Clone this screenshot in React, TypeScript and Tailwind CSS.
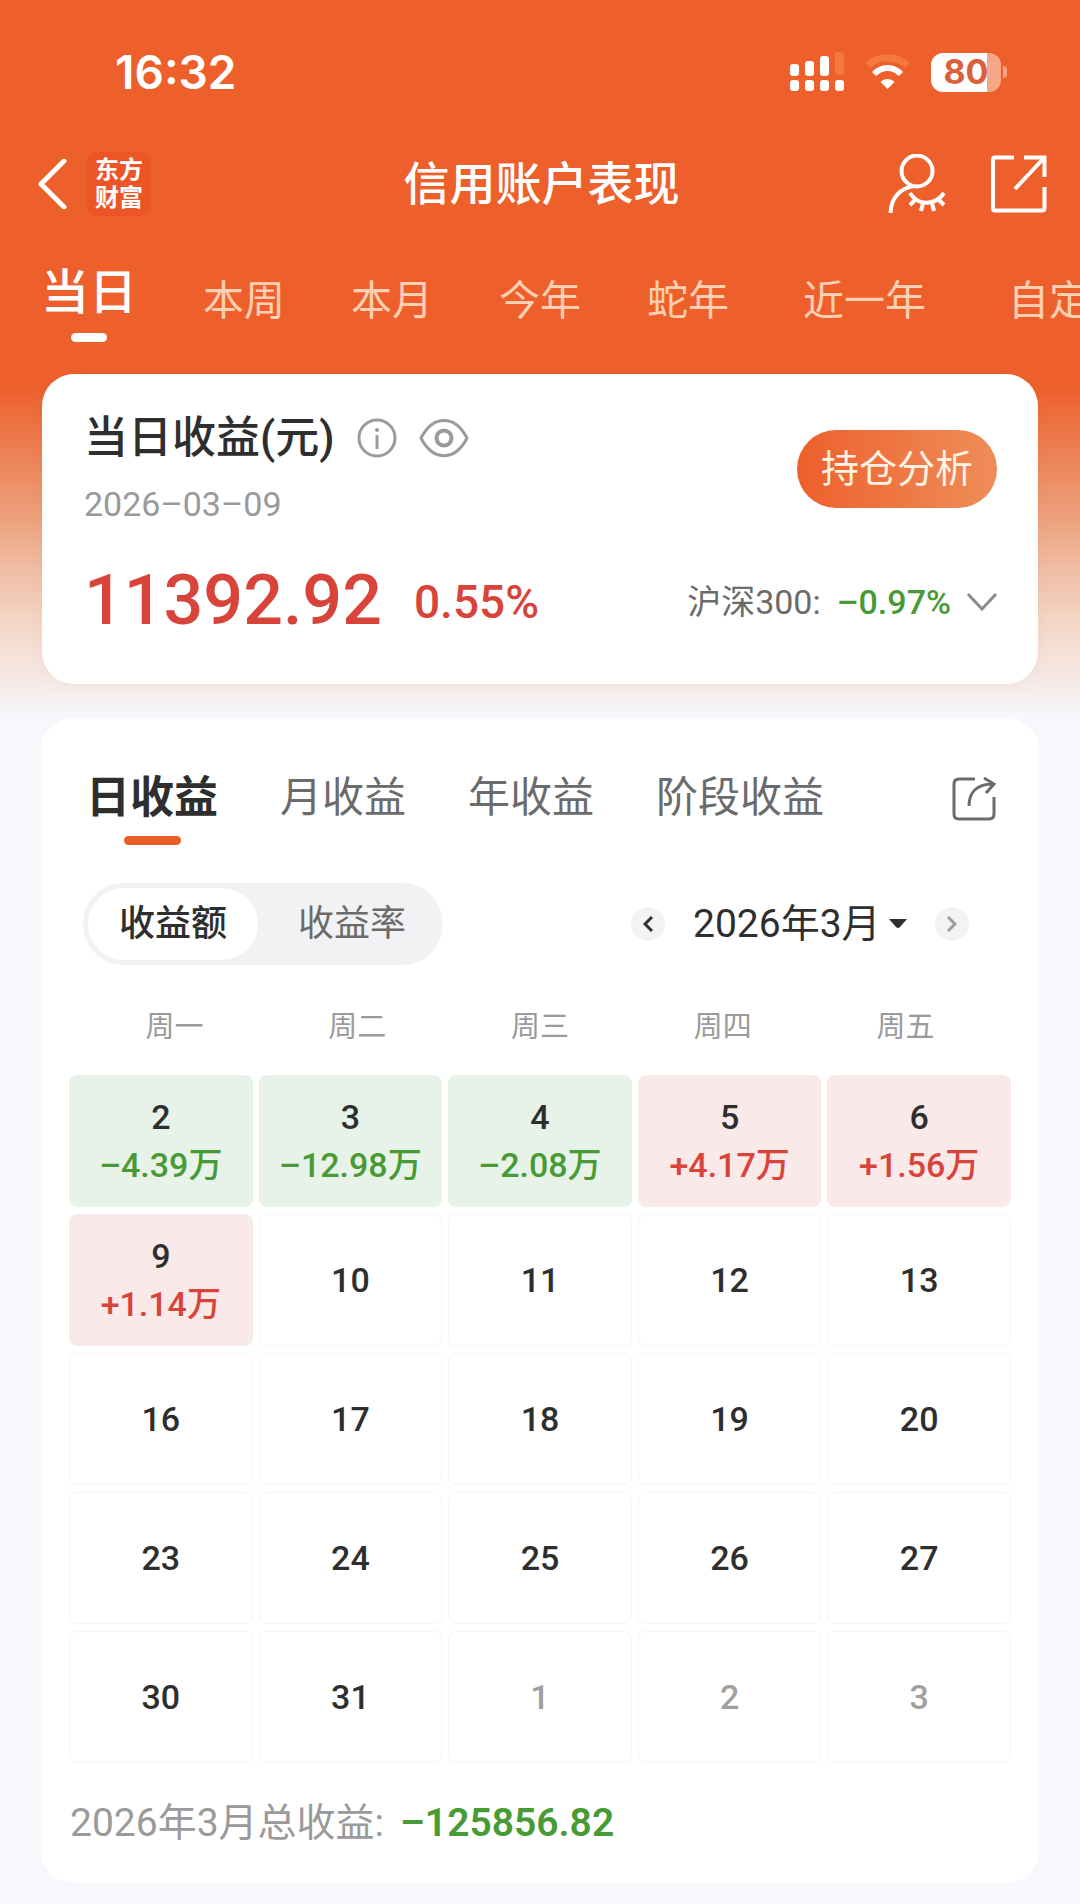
import { useState } from 'react';
import clsx from 'clsx';

const periods = ['当日', '本周', '本月', '今年', '蛇年', '近一年', '自定义'];
const profitTabs = ['日收益', '月收益', '年收益', '阶段收益'];
const weekdays = ['周一', '周二', '周三', '周四', '周五'];

type Day = { day: number; amount?: string; outside?: boolean };

const days: Day[] = [
    { day: 2, amount: '–4.39万' },
    { day: 3, amount: '–12.98万' },
    { day: 4, amount: '–2.08万' },
    { day: 5, amount: '+4.17万' },
    { day: 6, amount: '+1.56万' },
    { day: 9, amount: '+1.14万' },
    ...[10, 11, 12, 13, 16, 17, 18, 19, 20, 23, 24, 25, 26, 27, 30, 31].map(day => ({ day })),
    ...[1, 2, 3].map(day => ({ day, outside: true })),
];

function StatusBar() {
    return (
        <div className="flex h-[144px] items-center justify-between pl-[115px] pr-[73px]">
            <span className="font-['Inter',sans-serif] text-[46px] font-semibold leading-none">16:32</span>
            <div className="flex items-center gap-[21px]">
                <svg width="54" height="40" viewBox="0 0 54 40" fill="currentColor" aria-hidden="true">
                    <rect x="0" y="12" width="9" height="12" rx="3" />
                    <rect x="15" y="9" width="9" height="15" rx="3" />
                    <rect x="30" y="4" width="9" height="20" rx="3" />
                    <rect x="45" y="0" width="9" height="23" rx="3" fill="#f3793f" />
                    <rect x="0" y="28" width="9" height="11" rx="3" />
                    <rect x="15" y="28" width="9" height="11" rx="3" />
                    <rect x="30" y="28" width="9" height="11" rx="3" />
                    <rect x="45" y="28" width="9" height="11" rx="3" />
                </svg>
                <svg width="45" height="36" viewBox="0 0 45 36" fill="none" aria-hidden="true">
                    <path d="M2.500 11.500C14 1 31 1 42.500 11.500" stroke="#f3793f" strokeWidth="7" />
                    <path d="M9 20C17 12 28 12 36 20" stroke="currentColor" strokeWidth="6" />
                    <path d="M22.500 35L15.500 28C19 24 26 24 29.500 28Z" fill="currentColor" />
                </svg>
                <div className="flex items-center gap-[2px]">
                    <div className="flex h-[39px] w-[70px] items-center justify-center rounded-[12px] bg-[linear-gradient(to_right,#fff_80%,#f6a787_80%)] font-['Inter',sans-serif] text-[34px] font-bold leading-none text-[#d9603a]">
                        80
                    </div>
                    <div className="h-[12px] w-[4px] rounded-r-full bg-[#f6a787]" />
                </div>
            </div>
        </div>
    );
}

function NavBar() {
    return (
        <div className="grid h-[80px] grid-cols-[1fr_auto_1fr] items-center pl-[36px] pr-[33px]">
            <div className="flex items-center gap-[19px]">
                <button aria-label="返回">
                    <svg width="32" height="50" viewBox="0 0 32 50" fill="none" stroke="currentColor" strokeWidth="5" aria-hidden="true">
                        <path d="M28 2L5 25L28 48" strokeLinecap="round" strokeLinejoin="round" />
                    </svg>
                </button>
                <div className="rounded-[10px] bg-[#ec5627] px-[8px] py-[4px] text-[24px] font-bold leading-[28px]">
                    东方
                    <br />
                    财富
                </div>
            </div>
            <h1 className="text-[46px] font-medium leading-none">信用账户表现</h1>
            <div className="flex items-center justify-end gap-[44px]">
                <button aria-label="隐藏账户">
                    <svg width="58" height="60" viewBox="0 0 58 60" fill="none" stroke="currentColor" strokeWidth="4" aria-hidden="true">
                        <circle cx="29" cy="17" r="15.500" />
                        <path d="M26 32C12 34 3 44 2.500 59" />
                        <path d="M22 39C30 52 47 52 56 39" />
                        <path d="M28 45L22 51M35 49L33 57M44 49L46 57M50 45L56 51" />
                    </svg>
                </button>
                <button aria-label="分享">
                    <svg width="57" height="60" viewBox="0 0 57 60" fill="none" stroke="currentColor" strokeWidth="4" aria-hidden="true">
                        <path d="M24 3.500H5Q3 3.500 3 5.500V54Q3 56.500 5 56.500H52Q54.500 56.500 54.500 54V33" strokeLinejoin="round" />
                        <path d="M34 3.500H54.500V23M54 4L25 35" />
                    </svg>
                </button>
            </div>
        </div>
    );
}

function SummaryCard() {
    return (
        <section className="mx-[42px] rounded-[32px] bg-white pb-[44px] pl-[42px] pr-[41px] pt-[40px] shadow-[0_4px_16px_rgba(0,0,0,0.03)]">
            <div className="flex items-center justify-between">
                <div>
                    <div className="flex items-center gap-[22px] text-[#9a9a9a]">
                        <h2 className="text-[44px] font-medium leading-[48px] text-[#2e2e2e]">当日收益(元)</h2>
                        <button aria-label="说明">
                            <svg width="40" height="40" viewBox="0 0 40 40" fill="none" stroke="currentColor" strokeWidth="3" aria-hidden="true">
                                <circle cx="20" cy="20" r="18" />
                                <path d="M20 17V31" />
                                <circle cx="20" cy="12" r="2" fill="currentColor" stroke="none" />
                            </svg>
                        </button>
                        <button aria-label="隐藏金额">
                            <svg width="50" height="40" viewBox="0 0 50 40" fill="none" stroke="currentColor" strokeWidth="3" aria-hidden="true">
                                <path d="M2 20C14 -3.500 36 -3.500 48 20C36 43.500 14 43.500 2 20Z" strokeLinejoin="round" />
                                <circle cx="25" cy="20" r="7.500" strokeWidth="4" />
                            </svg>
                        </button>
                    </div>
                    <p className="mt-[22px] text-[34px] leading-[40px] text-[#9a9a9a]">2026–03–09</p>
                </div>
                <button className="h-[78px] w-[200px] rounded-full bg-gradient-to-r from-[#ed5f2b] to-[#ee8d58] text-[38px] leading-none text-[#fff3e6]">
                    持仓分析
                </button>
            </div>
            <div className="mt-[36px] flex items-center justify-between">
                <div className="flex items-center gap-[32px] text-[#d8433a]">
                    <strong className="text-[70px] font-medium leading-[80px]">11392.92</strong>
                    <span className="pt-1 text-[46px] font-medium leading-none">0.55%</span>
                </div>
                <button className="flex items-center gap-[16px] pt-1 text-[34px] leading-none">
                    <span className="text-[#6b6b6b]">沪深300:</span>
                    <span className="font-medium text-[#489a35]">–0.97%</span>
                    <svg width="30" height="18" viewBox="0 0 30 18" fill="none" stroke="#8c8c8c" strokeWidth="3" aria-hidden="true">
                        <path d="M1 1L15 16L29 1" />
                    </svg>
                </button>
            </div>
        </section>
    );
}

function DayCell({ day, amount, outside }: Day) {
    const loss = amount?.startsWith('–');
    return (
        <button
            className={clsx(
                'flex h-[132px] flex-col items-center justify-center rounded-[8px] border text-[34px] font-medium leading-[48px]',
                !amount && 'border-[#f5f5f5] bg-white',
                amount && (loss ? 'border-[#e7f3e8] bg-[#e7f3e8]' : 'border-[#f9e9e9] bg-[#f9e9e9]'),
                outside ? 'text-[#a0a0a0]' : 'text-[#2e2e2e]'
            )}
        >
            <span>{day}</span>
            {amount && <span className={loss ? 'text-[#489a35]' : 'text-[#d8433a]'}>{amount}</span>}
        </button>
    );
}

function ProfitCalendar() {
    const [tab, setTab] = useState('日收益');
    const [mode, setMode] = useState('收益额');

    return (
        <section className="mx-[41px] mt-[34px] rounded-[32px] bg-white px-[28px] pb-[34px] pt-[50px]">
            {/* Tabs */}
            <div className="flex items-start justify-between pl-[17px] pr-[14px]">
                <div className="flex gap-[62px]">
                    {profitTabs.map(t => (
                        <button
                            key={t}
                            onClick={() => setTab(t)}
                            className={clsx(
                                'flex flex-col items-center gap-[8px] whitespace-nowrap leading-[60px]',
                                t === tab ? 'text-[44px] font-bold text-[#2e2e2e]' : 'text-[42px] text-[#6b6b6b]'
                            )}
                        >
                            {t}
                            {t === tab && <span className="h-[9px] w-[57px] rounded-full bg-[#ea5d29]" />}
                        </button>
                    ))}
                </div>
                <button aria-label="分享收益" className="pt-2">
                    <svg width="46" height="46" viewBox="0 0 46 46" fill="none" stroke="#6b6b6b" strokeWidth="3" aria-hidden="true">
                        <path d="M24 3H8Q3 3 3 8V38Q3 43 8 43H38Q43 43 43 38V21" />
                        <path d="M18 30C18 16 26 8 42 8M33 2L43 8L35 17" />
                    </svg>
                </button>
            </div>

            {/* Amount / rate switch and month picker */}
            <div className="mt-[38px] flex items-center justify-between pl-[14px] pr-[42px]">
                <div className="flex rounded-full bg-[#f2f2f4] p-[5px] text-[36px]">
                    {['收益额', '收益率'].map(m => (
                        <button
                            key={m}
                            onClick={() => setMode(m)}
                            aria-pressed={m === mode}
                            className={clsx(
                                'h-[72px] rounded-full leading-none',
                                m === mode ? 'w-[170px] bg-white font-medium text-[#2e2e2e]' : 'w-[180px] pl-2 text-[#6b6b6b]'
                            )}
                        >
                            {m}
                        </button>
                    ))}
                </div>
                <div className="flex items-center text-[#2e2e2e]">
                    <button aria-label="上个月" className="flex size-[34px] items-center justify-center rounded-full bg-[#f3f3f5]">
                        <svg width="10" height="16" viewBox="0 0 10 16" fill="none" stroke="currentColor" strokeWidth="3" aria-hidden="true">
                            <path d="M9 1L2 8L9 15" />
                        </svg>
                    </button>
                    <select aria-label="月份" className="ml-[28px] appearance-none bg-transparent text-[39px] leading-[50px]">
                        <option>2026年3月</option>
                    </select>
                    <svg className="ml-[8px]" width="18" height="10" viewBox="0 0 18 10" fill="currentColor" aria-hidden="true">
                        <path d="M0 0H18L11 8Q9 10 7 8Z" />
                    </svg>
                    <button aria-label="下个月" className="ml-[28px] flex size-[34px] items-center justify-center rounded-full bg-[#f3f3f5] text-[#9a9a9a]">
                        <svg width="10" height="16" viewBox="0 0 10 16" fill="none" stroke="currentColor" strokeWidth="3" aria-hidden="true">
                            <path d="M1 1L8 8L1 15" />
                        </svg>
                    </button>
                </div>
            </div>

            {/* Calendar */}
            <div className="mt-[40px] grid grid-cols-5 px-[14px] text-center text-[29px] leading-[44px] text-[#9a9a9a]">
                {weekdays.map(w => (
                    <span key={w}>{w}</span>
                ))}
            </div>
            <div className="mt-[26px] grid grid-cols-5 gap-x-[6px] gap-y-[7px]">
                {days.map((d, i) => (
                    <DayCell key={i} {...d} />
                ))}
            </div>

            <p className="mt-[34px] flex items-center gap-[16px] pl-[1px] text-[39px] leading-[52px] text-[#9a9a9a]">
                2026年3月总收益:
                <span className="font-semibold text-[#489a35]">–125856.82</span>
            </p>
        </section>
    );
}

export default function App() {
    const [period, setPeriod] = useState('当日');

    return (
        <main className="min-h-screen overflow-hidden bg-[#f6f8fb] bg-[linear-gradient(to_bottom,#ed5f2b_385px,#eda27d_520px,#f0bfa8_573px,#f4d8c8_627px,#f6e9e6_680px,#f6f8fb_716px)] pb-[20px] font-['Roboto','Noto_Sans_CJK_SC',sans-serif]">
            <header className="text-white">
                <StatusBar />
                <NavBar />
                <nav className="flex h-[150px] items-start gap-[66px] overflow-hidden pl-[41px] pt-[34px]">
                    {periods.map(p => (
                        <button
                            key={p}
                            onClick={() => setPeriod(p)}
                            className={clsx(
                                'flex shrink-0 flex-col items-center gap-[5px] whitespace-nowrap leading-[70px]',
                                p === period ? 'text-[48px] font-medium' : 'pt-[8px] text-[41px] text-[#ffcfb3]',
                                p.length > 2 && 'px-[8px]'
                            )}
                        >
                            {p}
                            {p === period && <span className="h-[9px] w-[36px] rounded-full bg-white" />}
                        </button>
                    ))}
                </nav>
            </header>
            <SummaryCard />
            <ProfitCalendar />
        </main>
    );
}
